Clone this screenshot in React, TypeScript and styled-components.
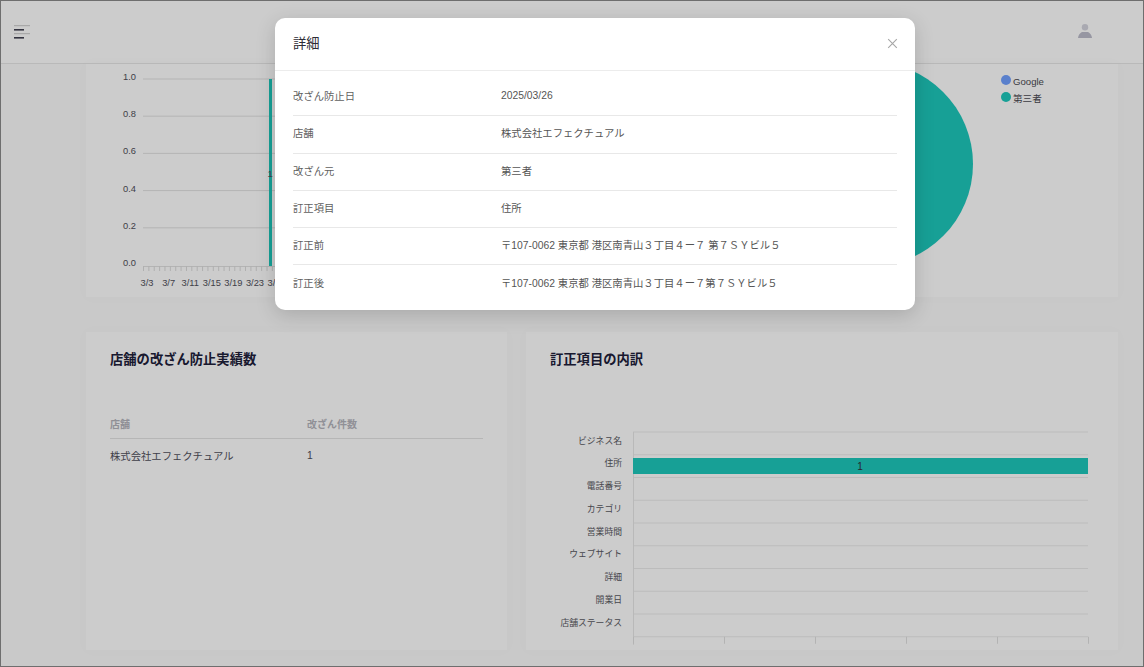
import React from "react";
import styled, { createGlobalStyle } from "styled-components";

const FONT = `"Liberation Sans", "Noto Sans CJK JP", sans-serif`;
const TEAL = "#1dc8bc";

const Global = createGlobalStyle`
  html, body { margin: 0; padding: 0; overflow: hidden; background: #fff; }
  body { font-family: ${FONT}; }
  * { box-sizing: border-box; }
`;

const Frame = styled.div`
  position: relative;
  width: 1144px;
  height: 667px;
  border: 1px solid #6e6e6e;
  overflow: hidden;
  background: #fcfcfc;
`;

const Header = styled.header`
  height: 63px;
  display: flex;
  align-items: center;
  justify-content: space-between;
  padding: 0 51px 0 13px;
  background: #ffffff;
  border-bottom: 1px solid #e8e8e8;
`;

const UserIcon = styled.svg`
  margin-bottom: 2px;
`;

const Content = styled.main`
  padding: 0 25px 0 85px;
  display: flex;
  flex-direction: column;
  gap: 35px;
`;

const Card = styled.section`
  background: #ffffff;
  box-shadow: 0 0 12px rgba(0, 0, 0, 0.025);
`;

const TopCard = styled(Card)`
  height: 233px;
  display: flex;
  padding-left: 34px;
`;

const LineSvg = styled.svg`
  flex: none;
  text {
    font-family: ${FONT};
    font-size: 9.3px;
    fill: #50505a;
  }
`;

const PieSvg = styled.svg`
  flex: none;
  margin-left: auto;
  margin-right: 28px;
`;

const Legend = styled.ul`
  list-style: none;
  margin: 0;
  padding: 9px 0 0;
  width: 117px;
  flex: none;
`;

const LegendItem = styled.li`
  display: flex;
  align-items: center;
  gap: 2px;
  height: 16.5px;
  font-size: 9.6px;
  color: #4a4a52;
`;

const Dot = styled.span<{ $color: string }>`
  width: 10px;
  height: 10px;
  border-radius: 50%;
  background: ${(p) => p.$color};
  margin-top: -2px;
`;

const BottomRow = styled.div`
  display: grid;
  grid-template-columns: 421px 592px;
  gap: 19px;
`;

const BottomCard = styled(Card)`
  height: 318px;
  padding: 19px 24px 0;
`;

const CardTitle = styled.h2`
  margin: 0;
  font-size: 13.3px;
  line-height: 18px;
  font-weight: 700;
  color: #20203a;
`;

const Table = styled.div`
  margin-top: 39px;
`;

const TableRow = styled.div<{ $head?: boolean }>`
  display: grid;
  grid-template-columns: 197px 1fr;
  align-items: center;
  font-size: ${(p) => (p.$head ? "10px" : "10.33px")};
  font-weight: ${(p) => (p.$head ? 700 : 400)};
  color: ${(p) => (p.$head ? "#b4b4bc" : "#50505c")};
  height: ${(p) => (p.$head ? "31px" : "33px")};
  border-bottom: ${(p) => (p.$head ? "1px solid #e4e4e4" : "none")};
`;

const BarSvg = styled.svg`
  display: block;
  margin-top: 56px;
  text {
    font-family: ${FONT};
    font-size: 8.8px;
    fill: #585860;
  }
`;

const BarValue = styled.text`
  && {
    font-size: 10px;
    fill: #30303a;
  }
`;

const Overlay = styled.div`
  position: absolute;
  inset: 0;
  background: rgba(0, 0, 0, 0.2);
  padding: 17px 0 0 274px;
`;

const Modal = styled.div`
  width: 640px;
  height: 292px;
  background: #ffffff;
  border-radius: 10px;
  box-shadow: 0 5px 20px rgba(0, 0, 0, 0.16);
`;

const ModalHeader = styled.div`
  height: 53px;
  display: flex;
  align-items: center;
  justify-content: space-between;
  padding: 0 17px 2px 18px;
  border-bottom: 1px solid #ececec;
`;

const ModalTitle = styled.h3`
  margin: 0 0 2px;
  font-size: 13.3px;
  font-weight: 400;
  color: #2c2c36;
`;

const CloseButton = styled.button`
  border: none;
  background: none;
  padding: 0;
  width: 11px;
  height: 11px;
  display: flex;
`;

const ModalBody = styled.div`
  padding: 8px 18px 0;
`;

const DetailRow = styled.div`
  display: grid;
  grid-template-columns: 208px 1fr;
  align-items: center;
  height: 37.25px;
  padding-bottom: 3px;
  font-size: 10.33px;
  color: #5f5f5f;
  border-bottom: 1px solid #e8e8e8;
  &:last-child {
    border-bottom: none;
  }
`;

const DetailValue = styled.div`
  color: #555555;
`;

const yTicks = ["1.0", "0.8", "0.6", "0.4", "0.2", "0.0"];
const xTicks = ["3/3", "3/7", "3/11", "3/15", "3/19", "3/23", "3/27"];

function LineChart() {
  const yAt = (i: number) => 15 + i * 37.2;
  return (
    <LineSvg width={420} height={233} viewBox="0 0 420 233">
      {yTicks.map((t, i) => (
        <g key={t}>
          <text x={16} y={yAt(i) + 1} textAnchor="end">{t}</text>
          {i < 5 && <line x1={23} x2={420} y1={yAt(i)} y2={yAt(i)} stroke="#e2e2e2" />}
        </g>
      ))}
      <line x1={23} x2={420} y1={202.5} y2={202.5} stroke="#e2e2e2" />
      {Array.from({ length: 60 }, (_, i) => (
        <line key={i} x1={23.5 + i * 5.37} x2={23.5 + i * 5.37} y1={202} y2={207} stroke="#dcdcdc" />
      ))}
      <rect x={149} y={15} width={3} height={187} fill={TEAL} />
      <text x={150} y={113} textAnchor="middle">1</text>
      {xTicks.map((t, i) => (
        <text key={t} x={27 + i * 21.6} y={222} textAnchor="middle">{t}</text>
      ))}
    </LineSvg>
  );
}

const categories = ["ビジネス名", "住所", "電話番号", "カテゴリ", "営業時間", "ウェブサイト", "詳細", "開業日", "店舗ステータス"];

function BarChart() {
  const step = 22.75;
  const top = 7;
  return (
    <BarSvg width={544} height={225} viewBox="0 0 544 225">
      {Array.from({ length: 10 }, (_, i) => (
        <line key={i} x1={83} x2={538} y1={top + i * step} y2={top + i * step} stroke="#ececec" strokeWidth={1.2} />
      ))}
      <line x1={83.5} x2={83.5} y1={top} y2={top + 9 * step + 8} stroke="#e8e8e8" />
      {[0, 1, 2, 3, 4, 5].map((i) => (
        <line key={i} x1={83.5 + i * 91} x2={83.5 + i * 91} y1={top + 9 * step} y2={top + 9 * step + 7} stroke="#e0e0e0" />
      ))}
      <rect x={83} y={33} width={455} height={16} fill={TEAL} />
      <BarValue x={310} y={44.5} textAnchor="middle">1</BarValue>
      {categories.map((c, i) => (
        <text key={c} x={72} y={top + i * step + 11.5} textAnchor="end">{c}</text>
      ))}
    </BarSvg>
  );
}

export default function App() {
  return (
    <>
      <Global />
      <Frame>
        <Header>
          <svg width="17" height="14" viewBox="0 0 17 14" aria-label="menu">
            <rect x="0" y="0" width="16" height="1.2" fill="#d2d2d2" />
            <rect x="0" y="4" width="10" height="1.6" fill="#404050" />
            <rect x="0" y="8" width="16" height="1.2" fill="#d2d2d2" />
            <rect x="0" y="12" width="10" height="1.6" fill="#404050" />
          </svg>
          <UserIcon width="14" height="14" viewBox="0 0 14 14" aria-label="user">
            <circle cx="7" cy="3.2" r="3.2" fill="#d4d4de" />
            <path d="M0 14 C0.4 10.5 3 8 4.6 8 L9.4 8 C11 8 13.6 10.5 14 14 Z" fill="#bcbccb" />
          </UserIcon>
        </Header>
        <Content>
          <TopCard>
            <LineChart />
            <PieSvg width={210} height={233} viewBox="0 0 210 233">
              <circle cx={108} cy={100} r={102} fill={TEAL} />
            </PieSvg>
            <Legend>
              <LegendItem><Dot $color="#71a1ff" />Google</LegendItem>
              <LegendItem><Dot $color={TEAL} />第三者</LegendItem>
            </Legend>
          </TopCard>
          <BottomRow>
            <BottomCard>
              <CardTitle>店舗の改ざん防止実績数</CardTitle>
              <Table>
                <TableRow $head>
                  <div>店舗</div>
                  <div>改ざん件数</div>
                </TableRow>
                <TableRow>
                  <div>株式会社エフェクチュアル</div>
                  <div>1</div>
                </TableRow>
              </Table>
            </BottomCard>
            <BottomCard>
              <CardTitle>訂正項目の内訳</CardTitle>
              <BarChart />
            </BottomCard>
          </BottomRow>
        </Content>
        <Overlay>
          <Modal>
            <ModalHeader>
              <ModalTitle>詳細</ModalTitle>
              <CloseButton aria-label="close">
                <svg width="11" height="11" viewBox="0 0 11 11">
                  <path d="M1.2 1.2 L9.8 9.8 M9.8 1.2 L1.2 9.8" stroke="#a6a6a6" strokeWidth="1.1" fill="none" />
                </svg>
              </CloseButton>
            </ModalHeader>
            <ModalBody>
              <DetailRow><div>改ざん防止日</div><DetailValue>2025/03/26</DetailValue></DetailRow>
              <DetailRow><div>店舗</div><DetailValue>株式会社エフェクチュアル</DetailValue></DetailRow>
              <DetailRow><div>改ざん元</div><DetailValue>第三者</DetailValue></DetailRow>
              <DetailRow><div>訂正項目</div><DetailValue>住所</DetailValue></DetailRow>
              <DetailRow><div>訂正前</div><DetailValue>〒107-0062 東京都 港区南青山３丁目４ー７ 第７ＳＹビル５</DetailValue></DetailRow>
              <DetailRow><div>訂正後</div><DetailValue>〒107-0062 東京都 港区南青山３丁目４ー７第７ＳＹビル５</DetailValue></DetailRow>
            </ModalBody>
          </Modal>
        </Overlay>
      </Frame>
    </>
  );
}
